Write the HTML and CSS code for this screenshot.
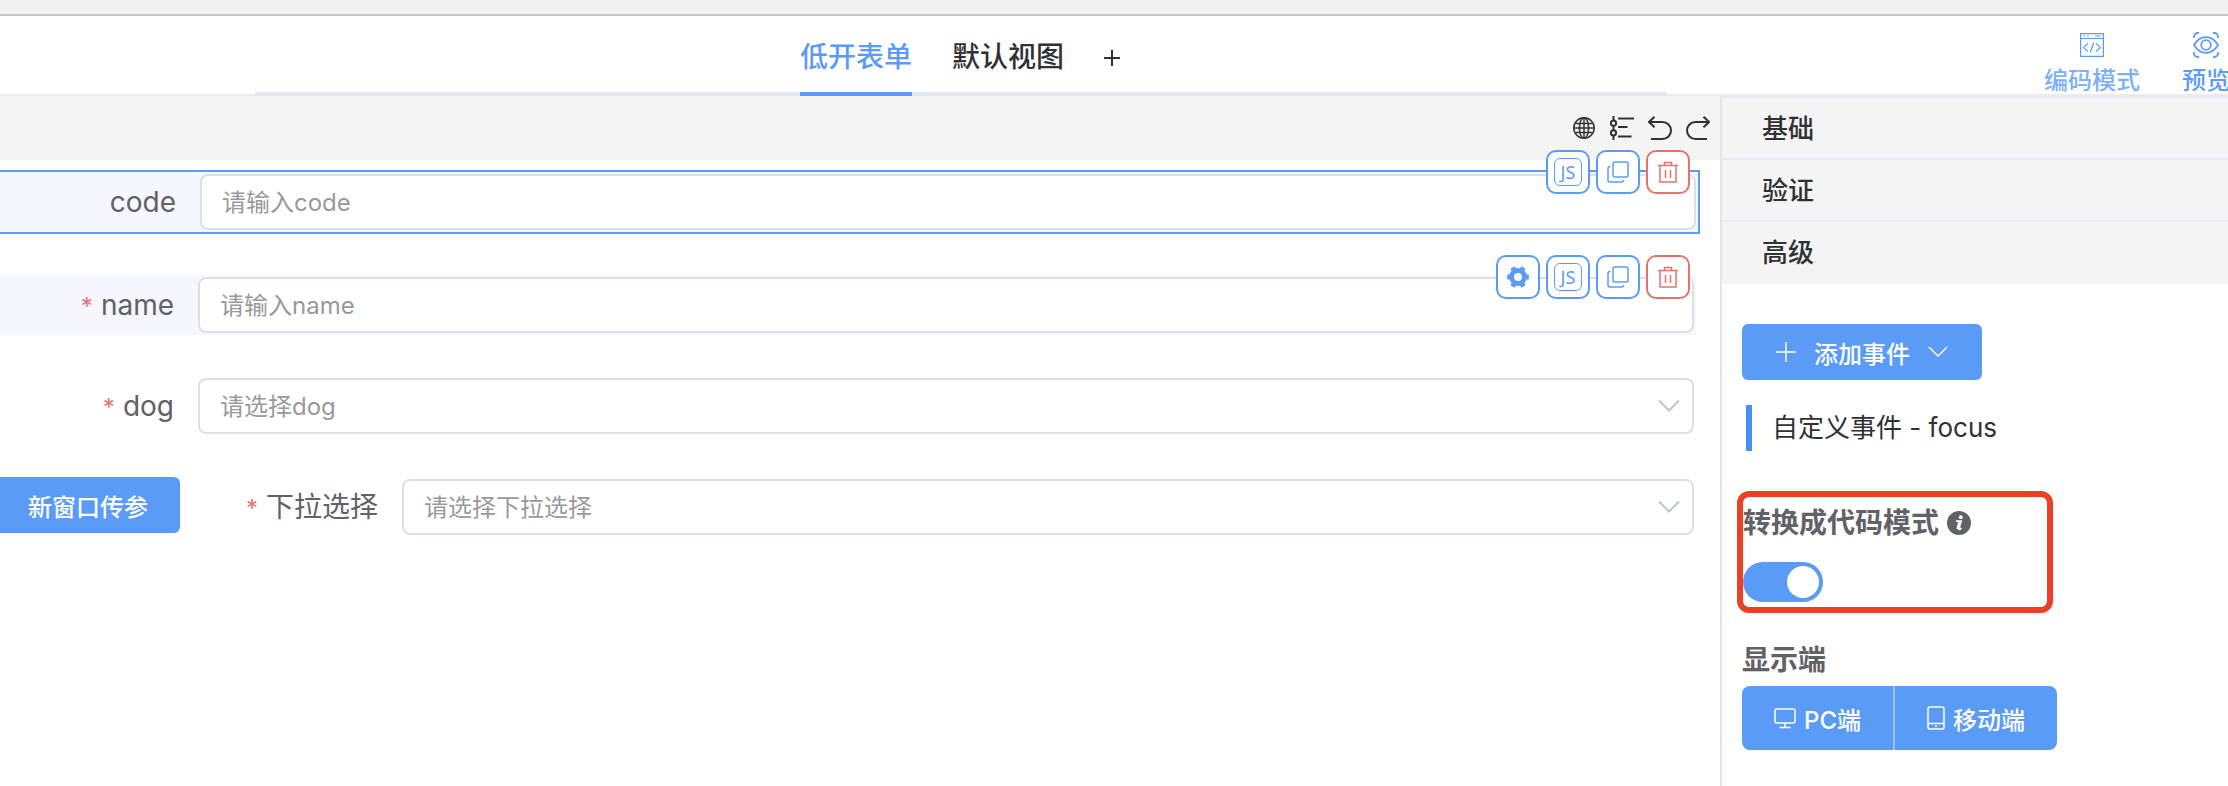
FILE: index.html
```html
<!DOCTYPE html>
<html lang="zh-CN">
<head>
  <meta charset="UTF-8" />
  <meta name="viewport" content="width=device-width, initial-scale=1.0" />
  <title>低开表单</title>
  <link rel="stylesheet" href="styles.css">
</head>
<body>
  <!-- shared icons -->
  <svg class="sprite" aria-hidden="true">
    <symbol id="icon-copy" viewBox="0 0 24 24">
      <rect x="7" y="2" width="15" height="15" rx="2" />
      <path d="M4.500 6.500H4a2 2 0 0 0-2 2V20a2 2 0 0 0 2 2h11.500a2 2 0 0 0 2-2" />
    </symbol>
    <symbol id="icon-trash" viewBox="0 0 24 24">
      <path d="M2 5.500h20M8.500 5.500V2.500h7v3M4 5.500V22h16V5.500M9.500 10v8M14.500 10v8" />
    </symbol>
    <symbol id="icon-chevron" viewBox="0 0 22 14">
      <path d="M1 1.500l10 10 10-10" />
    </symbol>
  </svg>

  <div class="topbar"></div>

  <header class="header">
    <nav class="tabs">
      <a href="#form" class="tab active">低开表单</a>
      <a href="#view" class="tab">默认视图</a>
      <button type="button" class="tab-add" aria-label="添加视图">
        <svg viewBox="0 0 16 16" width="16" height="16"><path d="M8 0v16M0 8h16" /></svg>
      </button>
    </nav>
    <div class="header-actions">
      <a href="#code" class="header-link light">
        <svg viewBox="0 0 24 24" width="28" height="28">
          <path d="M.6.600h22.800v22.800H.6zM.6 5.500h22.800M3.500 3h2M7 3h2M15 3h5.500M8 10.500L3.500 14.500l4.500 4M16 10.500l4.500 4-4.500 4M13.800 9.500l-3.600 10" />
        </svg>
        <span>编码模式</span>
      </a>
      <a href="#preview" class="header-link">
        <svg viewBox="0 0 26 26" width="28" height="28" class="eye">
          <path d="M1 6V4.500A3.500 3.500 0 0 1 4.500 1H6M20 1h1.500A3.500 3.500 0 0 1 25 4.500V6M25 20v1.500a3.500 3.500 0 0 1-3.500 3.500H20M6 25H4.500A3.500 3.500 0 0 1 1 21.500V20" />
          <path d="M1 13c3-5 7.500-7.800 12-7.800S22 8 25 13c-3 5-7.500 7.800-12 7.800S4 18 1 13z" />
          <circle cx="13" cy="13" r="4.800" />
        </svg>
        <span>预览</span>
      </a>
    </div>
  </header>

  <div class="layout">
    <main class="canvas">
      <div class="toolbar">
        <button type="button" class="tool" aria-label="语言">
          <svg viewBox="0 0 24 24" width="24" height="24" class="globe">
            <circle cx="12" cy="12" r="10.200" />
            <ellipse cx="12" cy="12" rx="4.600" ry="10.200" />
            <path d="M12 2v20M2 12h20M3.500 7.500h17M3.500 16.500h17" />
          </svg>
        </button>
        <button type="button" class="tool" aria-label="大纲">
          <svg viewBox="0 0 24 24" width="24" height="24">
            <path d="M3.500 0v4.500M3.500 10v4M3.500 19.500V24M8 2.500h16M8 11h9.500M8 20.500h13.500" />
            <circle cx="3.500" cy="7.200" r="2.600" />
            <circle cx="3.500" cy="16.800" r="2.600" />
          </svg>
        </button>
        <button type="button" class="tool" aria-label="撤销">
          <svg viewBox="0 0 24 24" width="24" height="24">
            <path d="M6.500 .8L1 6l5.500 5.200M1 6h13.500a8.500 8.500 0 0 1 0 17H3" />
          </svg>
        </button>
        <button type="button" class="tool" aria-label="重做">
          <svg viewBox="0 0 24 24" width="24" height="24">
            <path d="M17.500 .8L23 6l-5.500 5.200M23 6H9.500a8.500 8.500 0 0 0 0 17H21" />
          </svg>
        </button>
      </div>

      <form class="form">
        <div class="row hover selected">
          <label class="row-label" for="code">code</label>
          <input class="field" type="text" id="code" placeholder="请输入code" />
          <div class="row-actions">
            <button type="button" class="action" aria-label="JS"><span class="js">JS</span></button>
            <button type="button" class="action" aria-label="复制"><svg width="24" height="24"><use href="#icon-copy" /></svg></button>
            <button type="button" class="action danger" aria-label="删除"><svg width="24" height="24"><use href="#icon-trash" /></svg></button>
          </div>
        </div>

        <div class="row hover">
          <label class="row-label required" for="name">name</label>
          <input class="field" type="text" id="name" placeholder="请输入name" />
          <div class="row-actions">
            <button type="button" class="action" aria-label="设置">
              <svg viewBox="0 0 24 24" width="24" height="24" class="gear">
                <circle cx="12" cy="12" r="6.500" />
                <path d="M3.800 12H1.200M22.800 12h-2.600M7.900 4.900L6.600 2.600M17.400 21.400l-1.300-2.300M7.900 19.100l-1.300 2.300M17.400 2.600l-1.300 2.300" />
              </svg>
            </button>
            <button type="button" class="action" aria-label="JS"><span class="js">JS</span></button>
            <button type="button" class="action" aria-label="复制"><svg width="24" height="24"><use href="#icon-copy" /></svg></button>
            <button type="button" class="action danger" aria-label="删除"><svg width="24" height="24"><use href="#icon-trash" /></svg></button>
          </div>
        </div>

        <div class="row">
          <label class="row-label required" for="dog">dog</label>
          <div class="select-wrap">
            <select class="field" id="dog"><option value="">请选择dog</option></select>
            <svg class="arrow" width="22" height="14"><use href="#icon-chevron" /></svg>
          </div>
        </div>

        <div class="row">
          <button type="button" class="btn btn-window">新窗口传参</button>
          <label class="row-label required wide" for="drop">下拉选择</label>
          <div class="select-wrap">
            <select class="field" id="drop"><option value="">请选择下拉选择</option></select>
            <svg class="arrow" width="22" height="14"><use href="#icon-chevron" /></svg>
          </div>
        </div>
      </form>
    </main>

    <aside class="sidebar">
      <div class="collapse">
        <button type="button" class="collapse-title">基础</button>
        <button type="button" class="collapse-title">验证</button>
        <button type="button" class="collapse-title">高级</button>
      </div>

      <div class="panel">
        <button type="button" class="btn btn-add">
          <svg viewBox="0 0 20 20" width="20" height="20"><path d="M10 0v20M0 10h20" /></svg>
          <span>添加事件</span>
          <svg viewBox="0 0 22 14" width="20" height="14"><use href="#icon-chevron" /></svg>
        </button>

        <div class="event">自定义事件 - focus</div>

        <div class="convert">
          <label class="title" for="convert">转换成代码模式
            <svg viewBox="0 0 24 24" width="24" height="24">
              <circle cx="12" cy="12" r="12" fill="#606266" />
              <circle cx="13.800" cy="6.200" r="1.900" fill="#fff" />
              <path d="M9 10.200h5l-2.200 7.600c-.3 1.200.8.900 2.600-.8" fill="none" stroke="#fff" stroke-width="1.800" />
              <path d="M12.600 10.500l-2.100 7.500" stroke="#fff" stroke-width="2.400" />
            </svg>
          </label>
          <input type="checkbox" class="switch" id="convert" checked />
        </div>

        <div class="title">显示端</div>
        <div class="btn-group">
          <button type="button" class="btn">
            <svg viewBox="0 0 22 22" width="22" height="22"><path d="M3 2h16a2 2 0 0 1 2 2v10a2 2 0 0 1-2 2H3a2 2 0 0 1-2-2V4a2 2 0 0 1 2-2zM11 16v4M5.500 20.500h11" /></svg>
            <span>PC端</span>
          </button>
          <button type="button" class="btn">
            <svg viewBox="0 0 18 24" width="18" height="24"><path d="M3 1h12a2 2 0 0 1 2 2v18a2 2 0 0 1-2 2H3a2 2 0 0 1-2-2V3a2 2 0 0 1 2-2zM1 17.500h16M8 20.200h2" /></svg>
            <span>移动端</span>
          </button>
        </div>
      </div>
    </aside>
  </div>
</body>
</html>
```

FILE: styles.css
```css
* {
  box-sizing: border-box;
}

body {
  margin: 0;
  min-height: 100vh;
  display: flex;
  flex-direction: column;
  overflow: hidden;
  font-family: Inter, "Noto Sans CJK SC", sans-serif;
  font-size: 24px;
  color: #303133;
  background-color: #fff;
}

button,
input,
select {
  font-family: inherit;
  font-size: 24px;
}

button {
  padding: 0;
  border: none;
  background: none;
  cursor: pointer;
}

a {
  text-decoration: none;
}

svg {
  display: block;
  flex: none;
  fill: none;
  stroke: currentColor;
  stroke-width: 2;
}

.sprite {
  position: absolute;
  width: 0;
  height: 0;
}

.topbar {
  height: 16px;
  background-color: #f1f1f1;
  border-bottom: 2px solid #c6c6c6;
}

/* Header */
.header {
  display: flex;
  height: 80px;
  box-shadow: inset 0 -2px #eee9eb;
}

.tabs {
  flex: 1;
  display: flex;
  justify-content: center;
  gap: 40px;
  margin-left: 255px;
  box-shadow: inset 0 -4px #e4e7ed;
}

.tab {
  height: 80px;
  font-size: 28px;
  font-weight: 500;
  line-height: 82px;
  color: #303133;
}

.tab.active {
  color: #5b9bf8;
  box-shadow: inset 0 -4px #5b9bf8;
}

.tab-add {
  padding: 4px 2px 0 0;
  color: #303133;
}

.header-actions {
  width: 563px;
  display: flex;
  justify-content: flex-end;
  gap: 42px;
  padding-top: 15px;
  margin-right: -2px;
}

.header-link {
  flex: none;
  display: flex;
  flex-direction: column;
  align-items: center;
  gap: 4px;
  font-weight: 500;
  line-height: 36px;
  color: #5b9bf8;
}

.header-link svg {
  padding: 2px;
  stroke-width: 1.2;
}

.header-link .eye {
  padding: 1px;
  stroke-width: 1.8;
}

.header-link.light span {
  color: #7cb0fa;
}

/* Canvas */
.layout {
  flex: 1;
  display: flex;
}

.canvas {
  flex: 1;
}

.toolbar {
  display: flex;
  justify-content: flex-end;
  align-items: center;
  gap: 14px;
  height: 64px;
  padding: 0 10px;
  background-color: #f4f4f4;
}

.tool {
  color: #303133;
}

.globe {
  stroke-width: 1.5;
}

.form {
  display: flex;
  flex-direction: column;
  gap: 41px;
  padding: 10px 20px 0 0;
}

.row {
  position: relative;
  display: flex;
  align-items: center;
  height: 60px;
  margin-right: 4px;
  padding: 2px;
}

.row.hover {
  background-color: #f5f6fe;
}

.row.selected {
  height: 64px;
  margin-right: 0;
  padding-left: 4px;
  border: 2px solid #5b9bf8;
  border-left: none;
}

.row-label {
  width: 196px;
  padding-right: 24px;
  text-align: right;
  font-size: 28px;
  line-height: 56px;
  color: #606266;
}

.row-label.wide {
  width: 222px;
}

.row-label.required::before {
  content: "*";
  margin-right: 8px;
  font-size: 24px;
  line-height: 1;
  color: #e6716d;
}

.field {
  flex: 1;
  width: 100%;
  height: 56px;
  padding: 0 20px;
  border: 2px solid #dcdfe6;
  border-radius: 8px;
  background-color: #fff;
  color: #999;
  outline: none;
  appearance: none;
}

.field::placeholder {
  color: #999;
}

.select-wrap {
  position: relative;
  flex: 1;
  display: flex;
}

.arrow {
  position: absolute;
  top: 21px;
  right: 14px;
  color: #c0c4cc;
  pointer-events: none;
}

.row-actions {
  position: absolute;
  top: -20px;
  right: 6px;
  display: flex;
  gap: 6px;
}

.selected .row-actions {
  top: -22px;
  right: 8px;
}

.action {
  display: flex;
  align-items: center;
  justify-content: center;
  width: 44px;
  height: 44px;
  border: 2px solid #5b9bf8;
  border-radius: 10px;
  background-color: #fff;
  color: #5b9bf8;
}

.action svg {
  stroke-width: 1.5;
}

.action .gear {
  stroke-width: 5;
}

.action.danger {
  border-color: #e6716d;
  color: #e6716d;
}

.js {
  width: 28px;
  height: 28px;
  border: 1px solid #5b9bf8;
  border-radius: 6px;
  font-family: "Noto Sans", sans-serif;
  font-size: 18px;
  line-height: 26px;
}

.btn {
  display: flex;
  align-items: center;
  justify-content: center;
  height: 56px;
  border-radius: 6px;
  background-color: #5b9bf8;
  color: #fff;
  font-weight: 500;
}

.btn-window {
  align-self: flex-start;
  width: 180px;
  margin: -2px 0 0 -2px;
  padding-right: 4px;
  border-radius: 0 6px 6px 0;
}

/* Sidebar */
.sidebar {
  width: 508px;
  border-left: 2px solid #e4e4e4;
}

.collapse {
  padding-bottom: 2px;
  background-color: #f4f4f4;
}

.collapse-title {
  display: block;
  width: 100%;
  height: 62px;
  padding: 0 0 4px 40px;
  border-top: 2px solid #ebecf3;
  color: #303133;
  font-size: 26px;
  font-weight: 500;
  text-align: left;
}

.panel {
  padding: 40px 20px;
}

.btn svg {
  stroke-width: 1.5;
}

.btn-add {
  gap: 18px;
  padding: 0 34px;
}

.event {
  margin: 25px 4px 40px;
  padding-left: 20px;
  border-left: 6px solid #468ff8;
  font-size: 26px;
  line-height: 46px;
}

.convert {
  width: 316px;
  height: 122px;
  margin-left: -5px;
  border: 6px solid #eb4027;
  border-radius: 12px;
}

.title {
  display: flex;
  align-items: center;
  gap: 8px;
  font-size: 28px;
  font-weight: 700;
  line-height: 52px;
  color: #606266;
}

.title svg {
  stroke: none;
}

.switch {
  appearance: none;
  display: block;
  width: 80px;
  height: 40px;
  margin: 13px 0 0;
  padding: 4px;
  border-radius: 20px;
  background-color: #5b9bf8;
  cursor: pointer;
}

.switch::before {
  content: "";
  display: block;
  width: 32px;
  height: 32px;
  border-radius: 50%;
  background-color: #fff;
}

.switch:checked::before {
  margin-left: auto;
}

.convert + .title {
  margin-top: 21px;
}

.btn-group {
  display: flex;
}

.btn-group .btn {
  height: 64px;
  gap: 8px;
  padding: 0 32px;
  border-radius: 8px 0 0 8px;
}

.btn-group .btn + .btn {
  border-left: 2px solid #9cc3fb;
  border-radius: 0 8px 8px 0;
}
```
